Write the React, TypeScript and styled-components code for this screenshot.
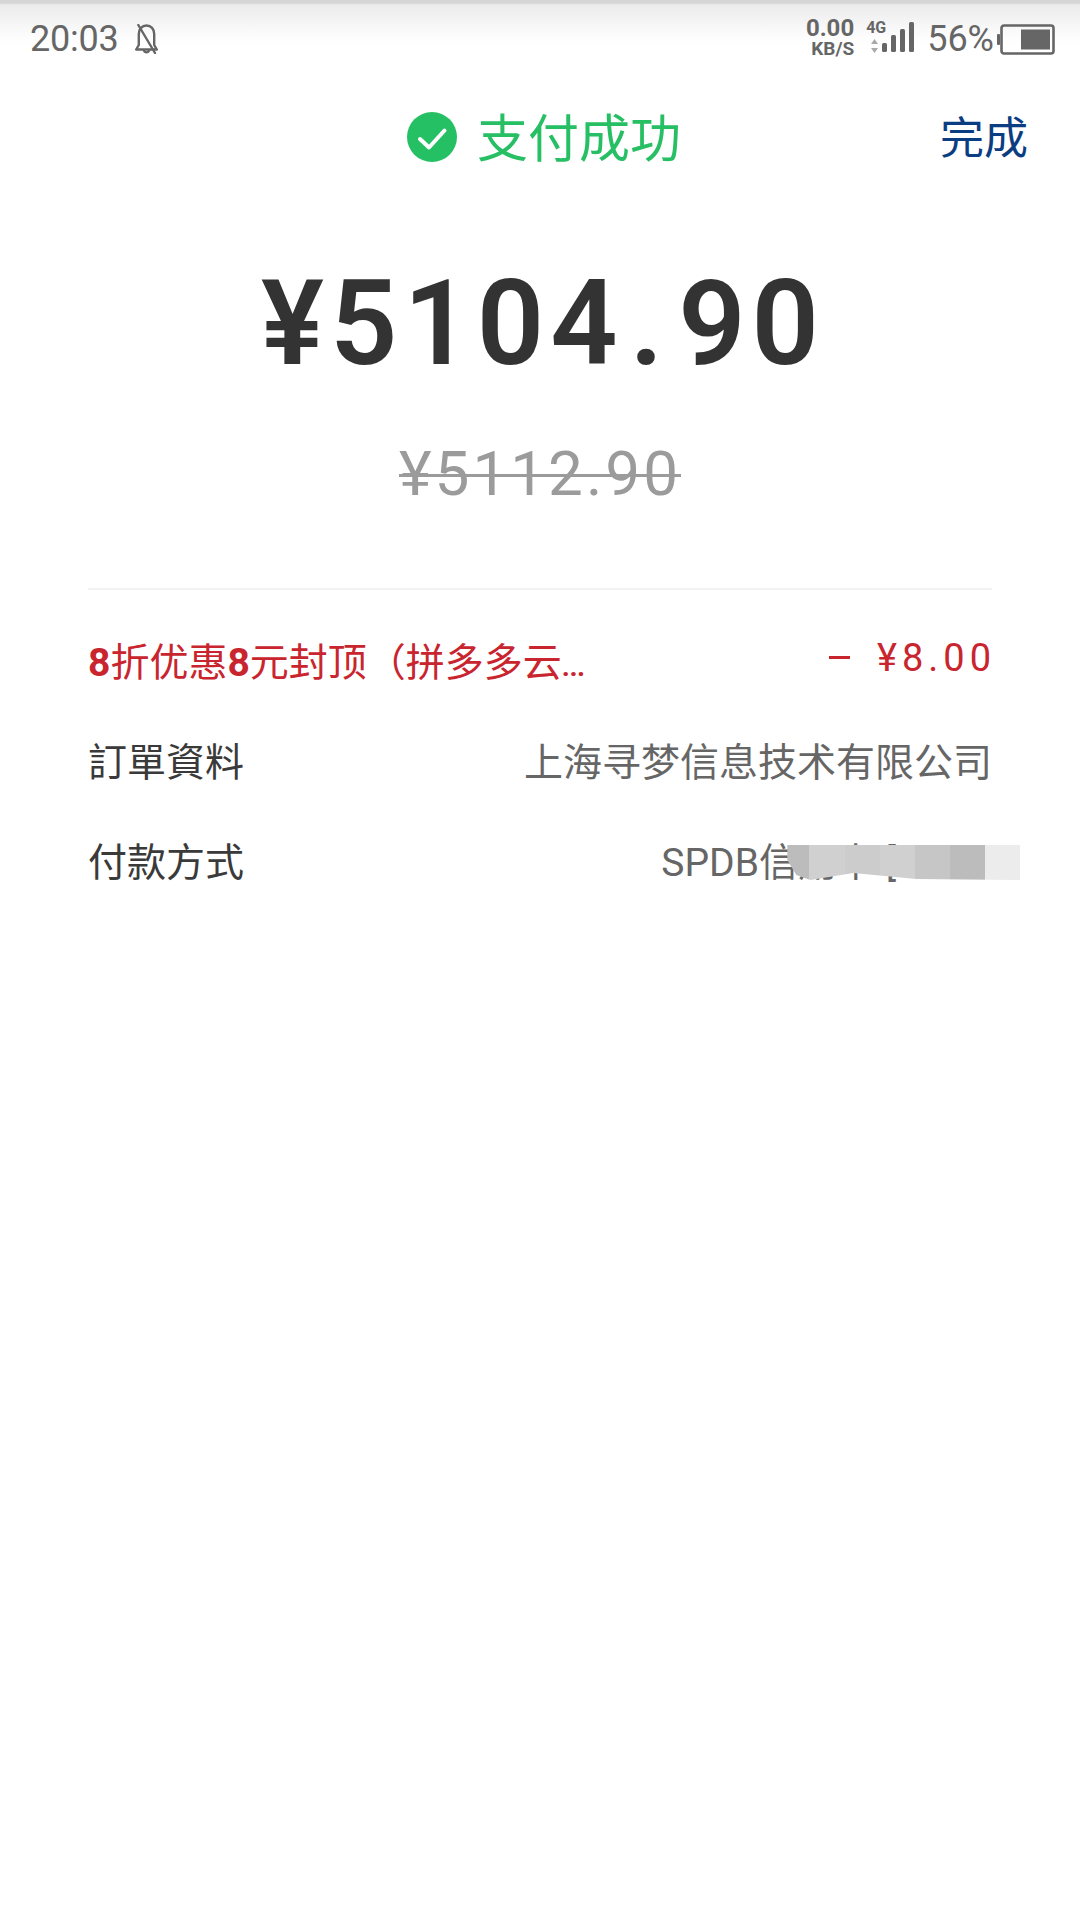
import * as React from 'react';
import styled, { createGlobalStyle } from 'styled-components';

const GlobalStyle = createGlobalStyle`
    html, body {
        margin: 0;
        padding: 0;
        background: #fff;
    }
    body {
        font-family: Roboto, "Noto Sans CJK SC", sans-serif;
    }
`;

const mosaicTiles = [
    { width: 22, color: '#bcbcbc' },
    { width: 36, color: '#d0d0d0' },
    { width: 35, color: '#cccccc' },
    { width: 35, color: '#d0d0d0' },
    { width: 35, color: '#c6c6c6' },
    { width: 35, color: '#bcbcbc' },
    { width: 35, color: '#ececec' },
];

const BellOff = () => (
    <BellIcon viewBox="0 0 23 30" fill="none" stroke="#666" strokeWidth="2.4" strokeLinejoin="round" strokeLinecap="round">
        <path d="M1.2 25.5h20.6l-2.6-4.5V10C19.2 5 16 1.5 11.5 1.5S3.8 5 3.8 10v11z" />
        <path d="M9 26.5a2.6 2.6 0 0 0 5 0" />
        <path d="M3.3 1l16.7 28" />
    </BellIcon>
);

const Signal = () => (
    <SignalIcon viewBox="0 0 49 40">
        <path d="M8.5 20l3.5 5h-7zM8.5 34l3.5-5h-7z" fill="#aaa" />
        <rect x="16" y="24" width="5" height="9" rx="1.5" fill="#666" />
        <rect x="25" y="16" width="5" height="17" rx="1.5" fill="#666" />
        <rect x="34" y="10" width="5" height="23" rx="1.5" fill="#666" />
        <rect x="43" y="3" width="5" height="30" rx="1.5" fill="#666" />
    </SignalIcon>
);

const Battery = () => (
    <BatteryIcon viewBox="0 0 58 31">
        <rect x="0" y="10" width="3" height="11" rx="1" fill="#666" />
        <rect x="4.5" y="1.5" width="52" height="28" rx="2.5" fill="none" stroke="#666" strokeWidth="2.6" />
        <rect x="24" y="5.5" width="29" height="20" fill="#666" />
    </BatteryIcon>
);

const CheckBadge = () => (
    <CheckIcon viewBox="0 0 50 50">
        <circle cx="25" cy="25" r="25" fill="#25c063" />
        <path d="M13 27l9 8.5 15.5-17" fill="none" stroke="#fff" strokeWidth="4" strokeLinecap="round" strokeLinejoin="round" />
    </CheckIcon>
);

export default function App() {
    return (
        <Page>
            <GlobalStyle />
            <StatusBar>
                <StatusLeft>
                    <Time>20:03</Time>
                    <BellOff />
                </StatusLeft>
                <StatusRight>
                    <Speed>
                        <SpeedValue>0.00</SpeedValue>
                        <SpeedUnit>KB/S</SpeedUnit>
                    </Speed>
                    <Network>
                        <NetworkLabel>4G</NetworkLabel>
                        <Signal />
                    </Network>
                    <Percent>56%</Percent>
                    <Battery />
                </StatusRight>
            </StatusBar>

            <Header>
                <HeaderTitle>
                    <CheckBadge />
                    <TitleText>支付成功</TitleText>
                </HeaderTitle>
                <DoneButton>完成</DoneButton>
            </Header>

            <Amount>¥5104<AmountDot>.</AmountDot>90</Amount>
            <OriginalAmount>¥5112.90</OriginalAmount>

            <Details>
                <Row>
                    <DiscountLabel><b>8</b>折优惠<b>8</b>元封顶（拼多多云<Dots>...</Dots></DiscountLabel>
                    <DiscountValue><Minus />¥8.00</DiscountValue>
                </Row>
                <Row>
                    <Label>訂單資料</Label>
                    <Value>上海寻梦信息技术有限公司</Value>
                </Row>
                <Row>
                    <Label>付款方式</Label>
                    <MaskedValue>
                        SPDB信用卡 [
                        <Mosaic>
                            {mosaicTiles.map((tile, i) => (
                                <MosaicTile key={i} $width={tile.width} $color={tile.color} />
                            ))}
                        </Mosaic>
                    </MaskedValue>
                </Row>
            </Details>
        </Page>
    );
}

const Page = styled.div`
    width: 1080px;
    height: 1920px;
    background: #fff;
    overflow: hidden;
`;

const StatusBar = styled.div`
    height: 78px;
    box-sizing: border-box;
    padding: 0 25px 0 30px;
    display: flex;
    align-items: center;
    justify-content: space-between;
    background: linear-gradient(to bottom, #d6d6d6 0, #d6d6d6 3px, #ececec 5px, #fdfdfd 38px, #fff 46px);
`;

const StatusLeft = styled.div`
    display: flex;
    align-items: center;
    gap: 16px;
`;

const Time = styled.span`
    font-size: 36px;
    letter-spacing: -0.2px;
    color: #666;
`;

const BellIcon = styled.svg`
    width: 23px;
    height: 30px;
    margin-top: -1px;
`;

const StatusRight = styled.div`
    display: flex;
    align-items: center;
`;

const Speed = styled.div`
    display: flex;
    flex-direction: column;
    align-items: flex-end;
    color: #666;
    font-weight: 700;
    margin: -3px 12px 0 0;
`;

const SpeedValue = styled.span`
    font-size: 24px;
    line-height: 22px;
`;

const SpeedUnit = styled.span`
    font-size: 19px;
    line-height: 20px;
`;

const Network = styled.div`
    position: relative;
    width: 49px;
    height: 40px;
    margin-right: 12px;
`;

const NetworkLabel = styled.span`
    position: absolute;
    left: 0;
    top: 0;
    font-size: 16px;
    line-height: 18px;
    font-weight: 700;
    color: #666;
`;

const SignalIcon = styled.svg`
    display: block;
    width: 49px;
    height: 40px;
`;

const Percent = styled.span`
    font-size: 36px;
    color: #666;
    margin-right: 3px;
`;

const BatteryIcon = styled.svg`
    width: 58px;
    height: 31px;
`;

const Header = styled.div`
    position: relative;
    height: 118px;
    display: flex;
    align-items: center;
    justify-content: center;
`;

const HeaderTitle = styled.div`
    display: flex;
    align-items: center;
    gap: 20px;
    margin-left: 8px;
`;

const CheckIcon = styled.svg`
    width: 50px;
    height: 50px;
`;

const TitleText = styled.span`
    font-size: 51px;
    line-height: 50px;
    margin-top: 5px;
    color: #27bf63;
`;

const DoneButton = styled.span`
    position: absolute;
    right: 52px;
    top: 31px;
    font-size: 44px;
    line-height: 60px;
    color: #0b3d82;
`;

const Amount = styled.div`
    margin-top: 63px;
    padding-left: 6px;
    height: 130px;
    line-height: 130px;
    text-align: center;
    font-size: 118px;
    font-weight: 600;
    letter-spacing: 6px;
    color: #333;
`;

const AmountDot = styled.span`
    margin-left: 6px;
    letter-spacing: 15px;
`;

const OriginalAmount = styled.div`
    margin-top: 50px;
    height: 70px;
    line-height: 70px;
    text-align: center;
    font-size: 62px;
    letter-spacing: 3px;
    color: #9b9b9b;
    text-decoration: line-through;
    text-decoration-thickness: 3px;
`;

const Details = styled.div`
    margin: 79px 88px 0;
    padding-top: 19px;
    border-top: 2px solid #f2f2f2;
`;

const Row = styled.div`
    height: 100px;
    display: flex;
    align-items: center;
    justify-content: space-between;
`;

const Label = styled.span`
    font-size: 39px;
    color: #3a3a3a;
`;

const DiscountLabel = styled(Label)`
    color: #c9252f;
`;

const Dots = styled.b`
    font-size: 28px;
    letter-spacing: -0.5px;
`;

const Value = styled.span`
    position: relative;
    font-size: 39px;
    color: #666;
    white-space: nowrap;
`;

const MaskedValue = styled(Value)`
    margin-right: 96px;
`;

const DiscountValue = styled.span`
    display: flex;
    align-items: center;
    font-size: 38px;
    letter-spacing: 5px;
    color: #c9252f;
    margin: -3px -4px 0 0;
`;

const Minus = styled.i`
    width: 21px;
    height: 3px;
    margin-right: 27px;
    background: #c9252f;
`;

const Mosaic = styled.div`
    position: absolute;
    left: 126px;
    top: 14px;
    height: 35px;
    display: flex;
    clip-path: polygon(0 0, 100% 0, 100% 100%, 129px 34px, 66px 28px, 23px 35px, 9px 30px, 0 15px);
`;

const MosaicTile = styled.div<{ $width: number; $color: string }>`
    width: ${p => p.$width}px;
    height: 100%;
    background: ${p => p.$color};
`;
